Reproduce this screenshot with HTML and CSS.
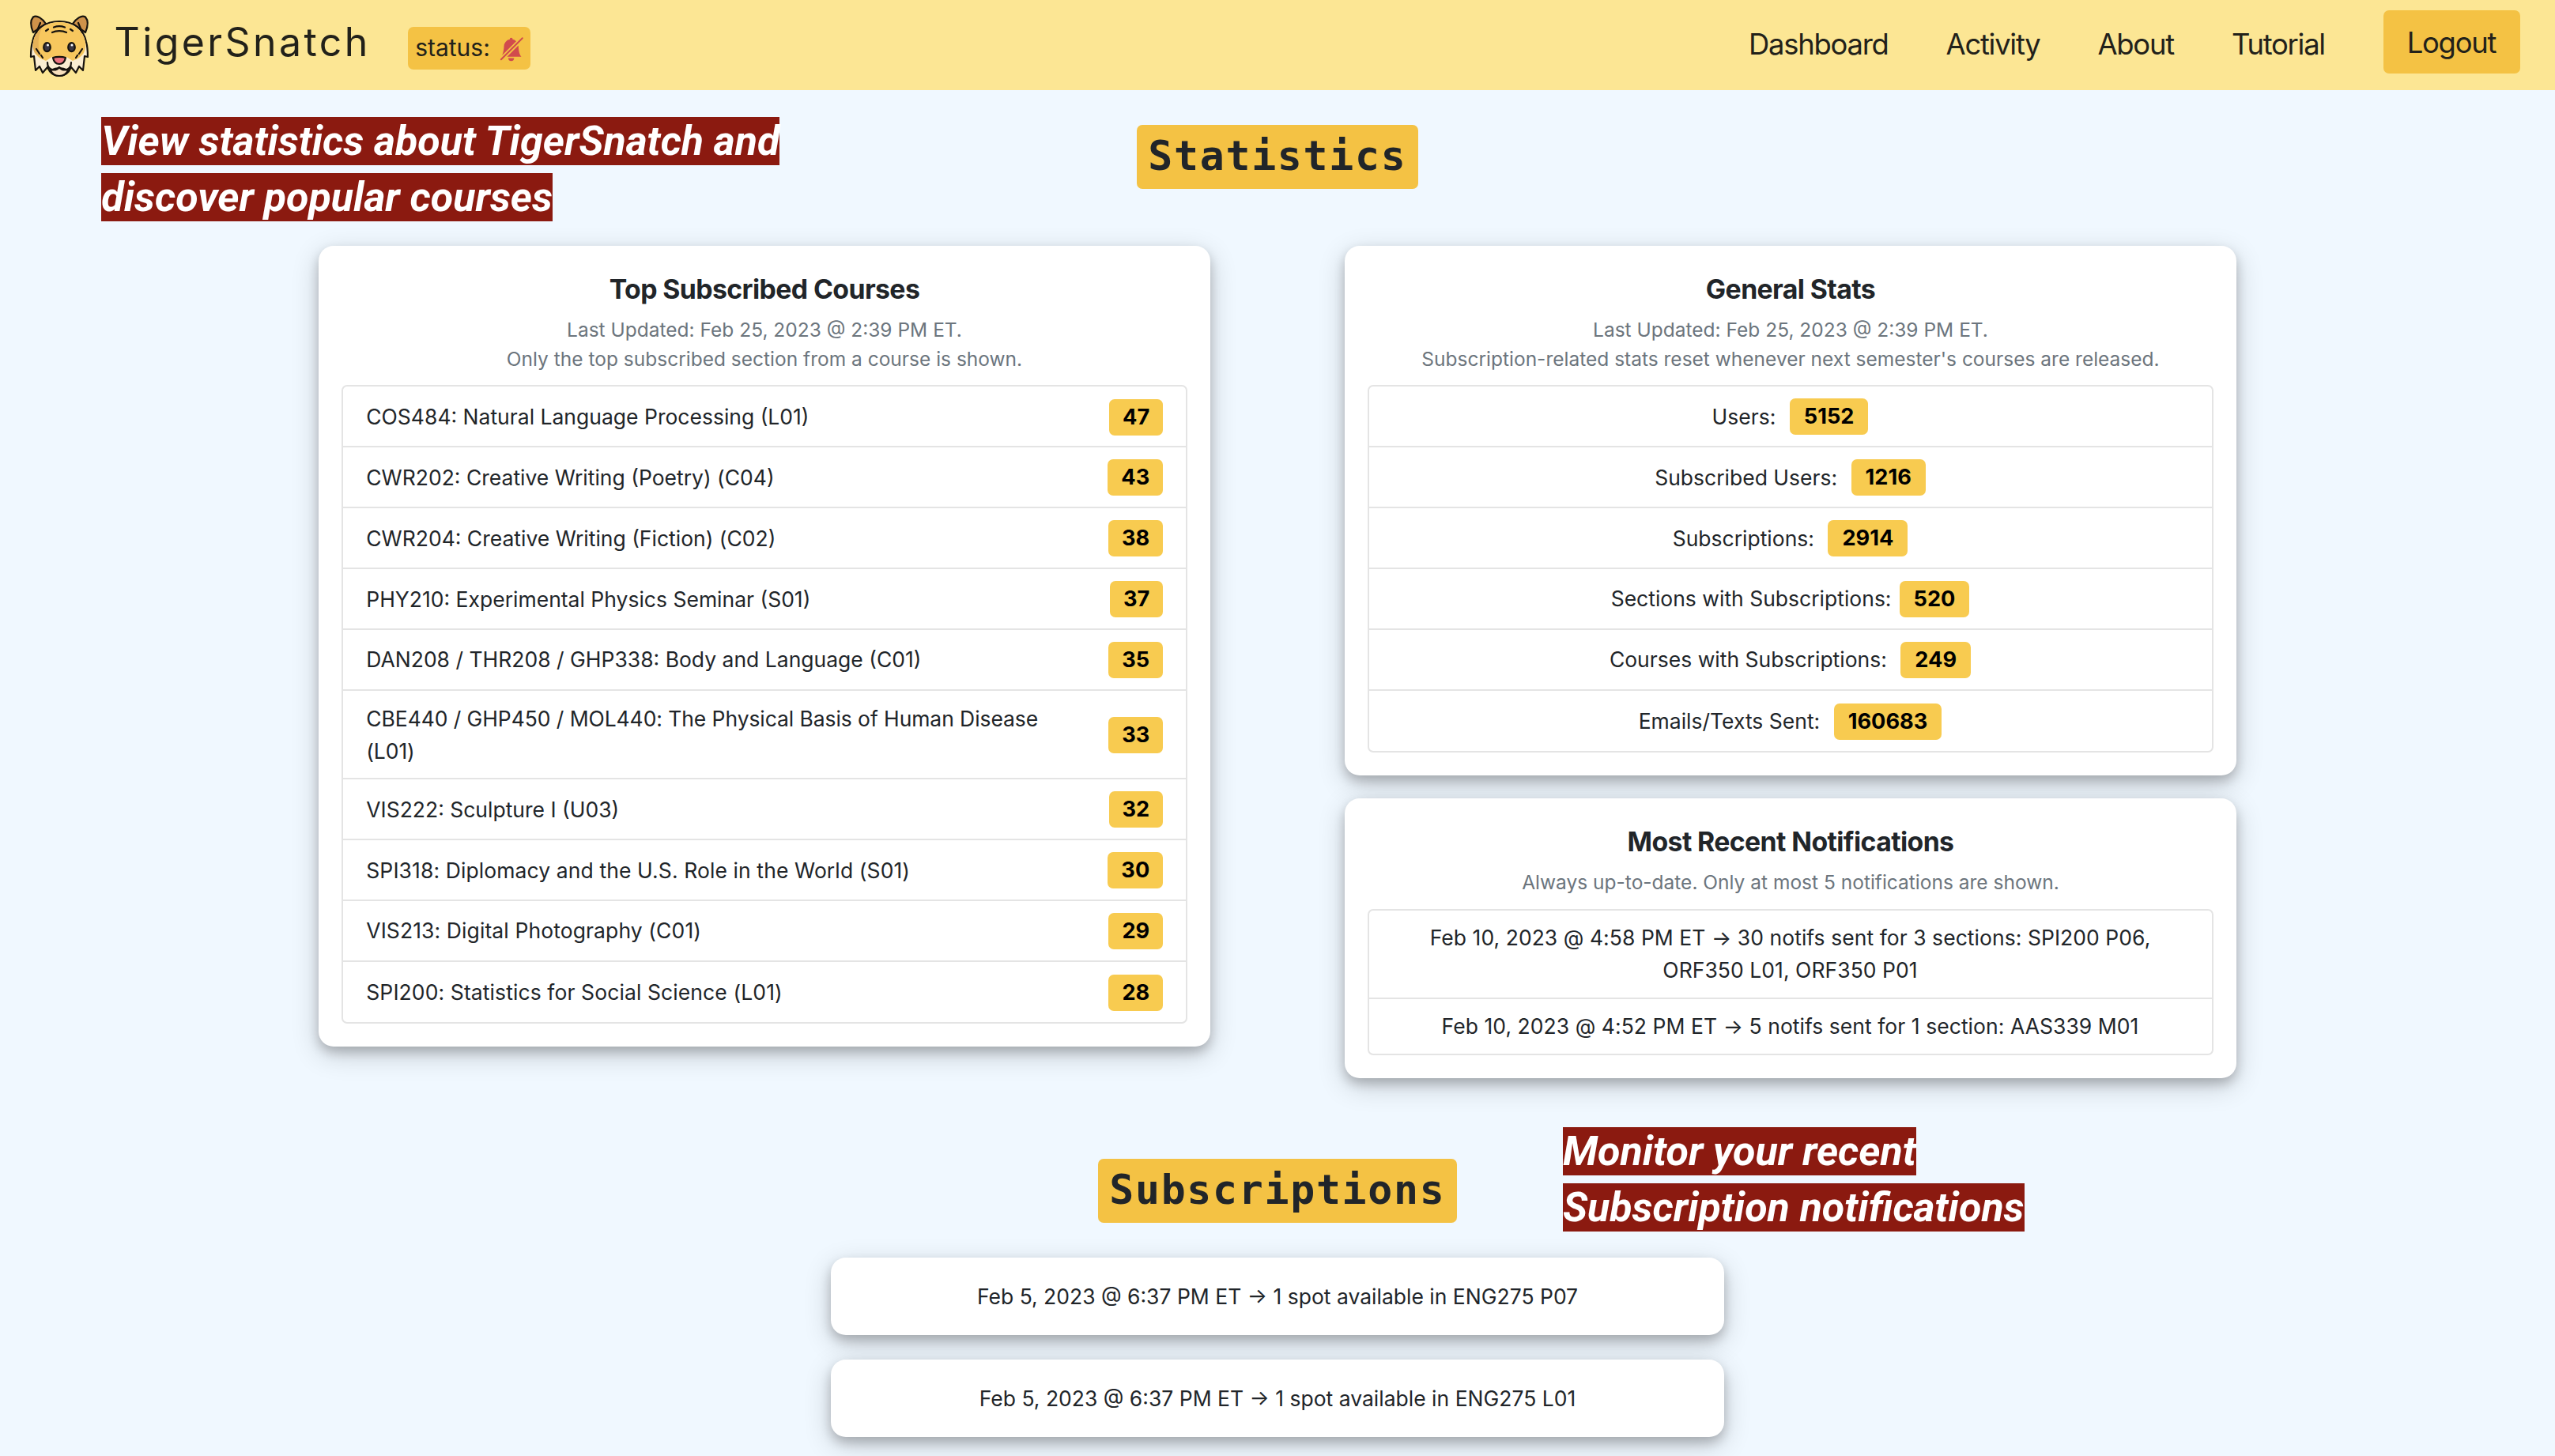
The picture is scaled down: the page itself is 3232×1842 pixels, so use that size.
FILE: index.html
```html
<!DOCTYPE html>
<html lang="en">
<head>
<meta charset="utf-8">
<title>TigerSnatch</title>
<link rel="stylesheet" href="styles.css">
</head>
<body>
<header class="navbar">
  <svg class="logo" viewBox="0 0 74 79" fill="none" stroke="#17130e" stroke-width="2.2" stroke-linejoin="round" stroke-linecap="round">
    <path fill="#cf924a" d="M4 22C1 15 0 7 4 2.500 9-.5 16 5 20 11zM70 22c3-7 4-15 0-19.500C65-.5 58 5 54 11z"/>
    <path fill="#fbeed2" d="M37 8C19 8 6 18 3 34c-2 7-2 12-2 19l4-1 1 9 1 9 5-5 4 8 6-7c3 7 8 11 15 11s12-4 15-11l6 7 4-8 5 5 1-9 1-9 4 1c0-7 0-12-2-19C68 18 55 8 37 8z"/>
    <path fill="#f7c75e" stroke="none" d="M37 9C20 9 7 19 4 34c-1 5 0 10 2 14 5 7 10 8 14 10l8-5h18l8 5c4-2 9-3 14-10 2-4 3-9 2-14C67 19 54 9 37 9z"/>
    <path fill="#e6b258" stroke="none" d="M16 15C9 20 5 27 4 35c-1 5 0 9 2 13l7 5c-3-12-4-27 3-38z"/>
    <path fill="#fbeed2" stroke="none" d="M22 58c4-5 9-6 15-3 6-3 11-2 15 3-1 7-7 11-15 11s-14-4-15-11z"/>
    <path fill="#f7dfbd" d="M26 70c4-2 8-3 11-3s7 1 11 3c-2 5-6 7-11 7s-9-2-11-7z"/>
    <path d="M22 60c0 10 10 12 15 6 5 6 15 4 15-6M8 22l5-12M66 22l-5-12M30 15.500c4-1.500 10-1.500 14 0M28 22c5-2.500 13-2.500 18 0M20 20l3-2M54 20l-3-2M8 43l4 6M66 43l-4 6M14 51l2 3M60 51l-2 3"/>
    <path fill="#ee7480" d="M29 54c4-1.500 12-1.500 16 0-1 5-4 8-8 8s-7-3-8-8z"/>
    <ellipse cx="21.500" cy="40.700" rx="4.300" ry="5.500" fill="#3b3643"/>
    <ellipse cx="52.500" cy="40.700" rx="4.300" ry="5.500" fill="#3b3643"/>
    <g fill="#fff" stroke="none"><circle cx="22.500" cy="38" r="1.500"/><circle cx="53" cy="38" r="1.500"/></g>
  </svg>
  <span class="brand">TigerSnatch</span>
  <span class="status">status:
    <svg class="bell" viewBox="0 0 16 16" fill="currentColor"><path d="M5.164 14H15c-1.500-1-2-5.902-2-7 0-.264-.02-.523-.06-.776L5.164 14zm6.288-10.617A4.988 4.988 0 0 0 8.995 2.100a1 1 0 1 0-1.990 0A5.002 5.002 0 0 0 3 7c0 .898-.335 4.342-1.278 6.113l9.730-9.730zM10 15a2 2 0 1 1-4 0h4zm-9.375.625a.53.53 0 0 0 .75.75l14.750-14.750a.53.53 0 0 0-.75-.75L.625 15.625z"/></svg>
  </span>
  <nav class="links">
    <a>Dashboard</a><a>Activity</a><a>About</a><a>Tutorial</a>
    <a class="logout">Logout</a>
  </nav>
</header>

<main class="page">
  <p class="callout callout-stats"><span>View statistics about TigerSnatch and<br>discover popular courses</span></p>
  <p class="callout callout-subs"><span>Monitor your recent<br>Subscription notifications</span></p>

  <h1 class="section-title">Statistics</h1>
  <div class="columns">
    <section class="card">
      <h2>Top Subscribed Courses</h2>
      <p class="note">Last Updated: Feb 25, 2023 @ 2:39 PM ET.<br>Only the top subscribed section from a course is shown.</p>
      <ul class="list courses">
        <li><span>COS484: Natural Language Processing (L01)</span><b class="count">47</b></li>
        <li><span>CWR202: Creative Writing (Poetry) (C04)</span><b class="count">43</b></li>
        <li><span>CWR204: Creative Writing (Fiction) (C02)</span><b class="count">38</b></li>
        <li><span>PHY210: Experimental Physics Seminar (S01)</span><b class="count">37</b></li>
        <li><span>DAN208 / THR208 / GHP338: Body and Language (C01)</span><b class="count">35</b></li>
        <li class="tall snug"><span>CBE440 / GHP450 / MOL440: The Physical Basis of Human Disease<br>(L01)</span><b class="count">33</b></li>
        <li><span>VIS222: Sculpture I (U03)</span><b class="count">32</b></li>
        <li class="wide"><span>SPI318: Diplomacy and the U.S. Role in the World (S01)</span><b class="count">30</b></li>
        <li class="wide"><span>VIS213: Digital Photography (C01)</span><b class="count">29</b></li>
        <li class="wide"><span>SPI200: Statistics for Social Science (L01)</span><b class="count">28</b></li>
      </ul>
    </section>
    <div class="stack">
      <section class="card">
        <h2>General Stats</h2>
        <p class="note">Last Updated: Feb 25, 2023 @ 2:39 PM ET.<br>Subscription-related stats reset whenever next semester's courses are released.</p>
        <ul class="list totals">
          <li><span>Users:</span><b class="count">5152</b></li>
          <li><span>Subscribed Users:</span><b class="count">1216</b></li>
          <li><span>Subscriptions:</span><b class="count">2914</b></li>
          <li class="tight"><span>Sections with Subscriptions:</span><b class="count">520</b></li>
          <li><span>Courses with Subscriptions:</span><b class="count">249</b></li>
          <li><span>Emails/Texts Sent:</span><b class="count">160683</b></li>
        </ul>
      </section>
      <section class="card">
        <h2>Most Recent Notifications</h2>
        <p class="note">Always up-to-date. Only at most 5 notifications are shown.</p>
        <ul class="list notifs">
          <li class="tall">Feb 10, 2023 @ 4:58 PM ET → 30 notifs sent for 3 sections: SPI200 P06,<br>ORF350 L01, ORF350 P01</li>
          <li>Feb 10, 2023 @ 4:52 PM ET → 5 notifs sent for 1 section: AAS339 M01</li>
        </ul>
      </section>
    </div>
  </div>

  <h1 class="section-title">Subscriptions</h1>
  <div class="alerts">
    <div class="card alert">Feb 5, 2023 @ 6:37 PM ET → 1 spot available in ENG275 P07</div>
    <div class="card alert">Feb 5, 2023 @ 6:37 PM ET → 1 spot available in ENG275 L01</div>
  </div>
</main>
</body>
</html>
```
FILE: styles.css
```css
* { box-sizing: border-box; margin: 0; padding: 0; }

body {
  height: 1842px;
  overflow: hidden;
  background: #f0f8ff;
  color: #212529;
  font-family: Inter, "Liberation Sans", sans-serif;
  font-size: 26.5px;
  line-height: 41px;
}

.navbar {
  display: flex;
  align-items: center;
  height: 113.7px;
  padding: 0 43.6px 0 37.5px;
  background: #fce694;
  color: #22211a;
}
.logo { width: 74px; height: 79px; overflow: visible; margin-top: 3px; }
.brand { margin: -7px 0 0 33px; font-size: 50px; letter-spacing: 3.4px; }
.status {
  display: flex;
  align-items: center;
  gap: 12px;
  height: 54px;
  margin: 8px 0 0 47.5px;
  padding: 0 10px 0 9px;
  border-radius: 7px;
  background: #f4c244;
  font-size: 30px;
}
.bell { width: 29.300px; height: 29.300px; overflow: visible; color: #d14b4d; }
.links {
  display: flex;
  align-items: center;
  gap: 73px;
  margin-left: auto;
  font-size: 36.400px;
  letter-spacing: -1.250px;
}
.logout {
  width: 173px;
  height: 80.500px;
  margin: -8px 0 0 1.500px;
  padding-right: 2px;
  border-radius: 7px;
  background: #f4c244;
  line-height: 82px;
  text-align: center;
}

.page { position: relative; display: flex; flex-direction: column; align-items: center; padding-top: 44.500px; }

.section-title {
  height: 80.500px;
  padding: 0 15px 0 14.700px;
  border-radius: 7px;
  background: #f4c244;
  font: bold 51.500px/78px "DejaVu Sans Mono", monospace;
  letter-spacing: 1.700px;
}

.callout {
  position: absolute;
  z-index: 1;
  color: #fff;
  font: italic bold 51.950px/71px Roboto, sans-serif;
  white-space: nowrap;
}
.callout span { background: #8b1a10; }
.callout-stats { left: 128.300px; top: 29px; }
.callout-subs { left: 1977px; top: 1307px; }

.columns {
  display: grid;
  grid-template-columns: 1127.500px 1127.500px;
  gap: 170.500px;
  align-items: start;
  margin: 72.300px 0 102px;
}
.stack { display: flex; flex-direction: column; gap: 28.400px; }

.card {
  padding: 33px 29px;
  border-radius: 19px;
  background: #fff;
  box-shadow: 0 7px 14px rgba(0, 0, 0, .2), 0 10px 34px rgba(0, 0, 0, .19);
  text-align: center;
}
.card h2 { font-size: 33.800px; font-weight: 700; letter-spacing: -.600px; line-height: 44px; }
.note { margin: 11px 0 15px; color: #6c757d; font-size: 24.500px; line-height: 36.700px; }
section.card { padding-bottom: 29px; }

.list { list-style: none; border: 2px solid #e4e4e4; border-radius: 7px; }
.list li { display: flex; align-items: center; justify-content: center; height: 76.850px; }
.list li:not(:last-child) { border-bottom: 2px solid #e4e4e4; }
.list .tall { height: 112px; }
.courses li { justify-content: space-between; padding: 1.500px 28.500px 0 29px; text-align: left; }
.courses .tall { height: 112.500px; }
.wide { letter-spacing: .1px; }
.snug { letter-spacing: -.08px; }
.totals li { gap: 17.500px; padding: 1px 1px 0 0; }
.totals .tight { gap: 10px; }
.list.notifs li { padding-right: 1px; letter-spacing: .05px; }
.list.notifs li:last-child { height: 69.500px; }

.count {
  height: 46px;
  padding: 0 18px;
  border-radius: 7px;
  background: #f8cb50;
  color: #000;
  font-size: 27.200px;
  font-weight: 700;
  letter-spacing: 0;
  line-height: 46px;
}
.courses .count { padding: 0 17px; }

.alerts { display: flex; flex-direction: column; gap: 30.500px; width: 1130px; margin-top: 44.200px; }
.alert { height: 98.500px; padding: 0; line-height: 98px; }
```
